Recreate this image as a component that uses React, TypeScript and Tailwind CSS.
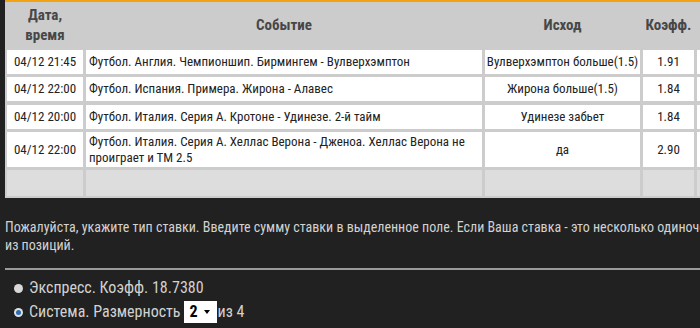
const rows = [
  {
    date: '04/12 21:45',
    event: 'Футбол. Англия. Чемпионшип. Бирмингем - Вулверхэмптон',
    outcome: 'Вулверхэмптон больше(1.5)',
    coef: '1.91',
    h: 'h-[24px]',
  },
  {
    date: '04/12 22:00',
    event: 'Футбол. Испания. Примера. Жирона - Алавес',
    outcome: 'Жирона больше(1.5)',
    coef: '1.84',
    h: 'h-[24px]',
  },
  {
    date: '04/12 20:00',
    event: 'Футбол. Италия. Серия А. Кротоне - Удинезе. 2-й тайм',
    outcome: 'Удинезе забьет',
    coef: '1.84',
    h: 'h-[24px] mt-[1px]',
  },
  {
    date: '04/12 22:00',
    event: 'Футбол. Италия. Серия А. Хеллас Верона - Дженоа. Хеллас Верона не проиграет и ТМ 2.5',
    outcome: 'да',
    coef: '2.90',
    h: 'h-[35px]',
  },
];

const cols = 'grid grid-cols-[76px_396px_155px_51px_60px] gap-x-[3px]';

export default function App() {
  return (
    <div
      className="w-[700px] h-[328px] overflow-hidden bg-[#212121] text-[#d2d2d2] font-stretch-condensed"
      style={{ fontFamily: '"Roboto Condensed", Roboto, "Liberation Sans", sans-serif' }}
    >
      <div className="w-[780px] pl-[5px]">
        <div className="h-[2px] bg-[#f2a30f]" />
        <div className="bg-[#cccccc] px-[2px] pb-[2px]">
          <div className={`${cols} h-[46px] text-[15px] font-bold text-[#474747] leading-[20px]`}>
            <div className="flex items-center justify-center text-center">Дата,<br />время</div>
            <div className="flex items-center justify-center">Событие</div>
            <div className="flex items-center justify-center">Исход</div>
            <div className="flex items-center justify-center">Коэфф.</div>
            <div />
          </div>
          <div className="flex flex-col gap-y-[3px] pt-[2px] text-[13px] text-[#222] leading-[16px]">
            {rows.map((r, i) => (
              <div key={i} className={`${cols} ${r.h}`}>
                <div className="bg-white flex items-center justify-center">{r.date}</div>
                <div className="bg-white flex items-center px-[3px]">{r.event}</div>
                <div className="bg-white flex items-center justify-center">{r.outcome}</div>
                <div className="bg-white flex items-center justify-center">{r.coef}</div>
                <div className="bg-white" />
              </div>
            ))}
            <div className={`${cols} h-[26px]`}>
              <div className="bg-[#dddddd]" />
              <div className="bg-[#dddddd]" />
              <div className="bg-[#dddddd]" />
              <div className="bg-[#dddddd]" />
              <div className="bg-[#dddddd]" />
            </div>
          </div>
        </div>

        <div className="pt-[20px] text-[14px] leading-[18px] whitespace-nowrap">
          <p>Пожалуйста, укажите тип ставки. Введите сумму ставки в выделенное поле. Если Ваша ставка - это несколько одиночек, укажите сумму для каждой</p>
          <p>из позиций.</p>
        </div>

        <div className="mt-[14px] h-[2px] bg-[#9a9a9a]" />

        <div className="pl-[9px] pt-[6px] text-[16px] leading-[24px]">
          <label className="flex items-center gap-[6px]">
            <span className="w-[9px] h-[9px] rounded-full bg-[#d8d8d8]" />
            Экспресс. Коэфф. 18.7380
          </label>
          <label className="flex items-center">
            <span className="mr-[6px] w-[9px] h-[9px] rounded-full bg-[#e0e0e0] flex items-center justify-center">
              <span className="w-[5px] h-[5px] rounded-full bg-[#2a6db5]" />
            </span>
            Система. Размерность
            <span className="ml-[3px] mr-[1px] flex items-center bg-white text-black font-bold h-[22px] w-[33px] pl-[6px] gap-[6px]">
              2
              <span className="border-x-[3px] border-x-transparent border-t-[4px] border-t-black" />
            </span>
            из 4
          </label>
        </div>
      </div>
    </div>
  );
}
